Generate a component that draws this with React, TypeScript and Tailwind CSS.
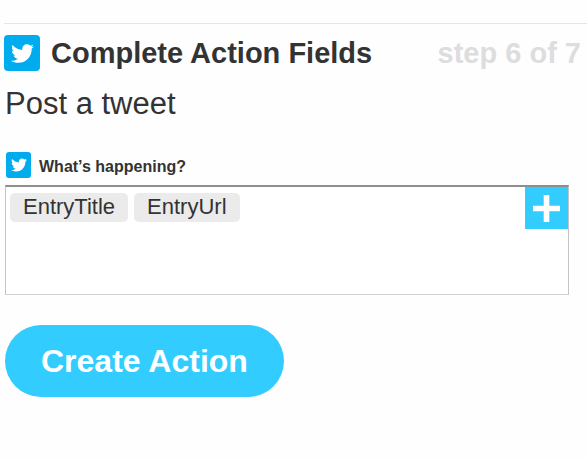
import React, { useState } from 'react';
import { FaTwitter } from 'react-icons/fa';

const fields = ['EntryTitle', 'EntryUrl'];

const App: React.FC = () => {
  const [text, setText] = useState('');

  return (
    <main className="min-h-screen bg-[#fefefe] pt-[23px] text-[#333333] font-['Liberation_Sans',Arial,sans-serif]">

      {/* Step header */}
      <header className="ml-1 flex items-center border-t border-[#e6e6e6] pt-[11px] pr-[6px] text-[29px] leading-9 font-bold">
        <span className="flex h-9 w-9 shrink-0 items-center justify-center rounded-[4px] bg-[#00acee]">
          <FaTwitter className="h-[23px] w-[23px] text-white" />
        </span>
        <h1 className="ml-[11px]">Complete Action Fields</h1>
        <span className="ml-auto text-[#dddddd]">step 6 of 7</span>
      </header>

      <form className="pl-[5px] pr-[18px]" onSubmit={e => e.preventDefault()}>
        <h2 className="mt-[15px] text-[31px] leading-9">Post a tweet</h2>

        {/* Tweet body */}
        <label htmlFor="tweet" className="mt-[30px] flex items-end gap-2 pl-px text-base leading-[22px] font-bold">
          <span className="flex h-[26px] w-[25px] shrink-0 items-center justify-center rounded-[3px] bg-[#00acee]">
            <FaTwitter className="h-4 w-4 text-white" />
          </span>
          What’s happening?
        </label>
        <div className="mt-[7px] flex h-[110px] items-start border border-t-2 border-[#c4c4c4] border-t-[#8e8e8e] border-b-[#d2d2d2] bg-white">
          <div className="flex min-w-0 flex-1 flex-wrap gap-[6px] pt-[6px] pl-1">
            {fields.map(field => (
              <span key={field} className="h-[29px] rounded-[5px] bg-[#ebebeb] px-[13px] text-[22px] leading-[28px]">
                {field}
              </span>
            ))}
            <input
              id="tweet"
              value={text}
              onChange={e => setText(e.target.value)}
              className="h-[29px] min-w-0 flex-1 text-[22px] outline-none"
            />
          </div>
          <button type="button" aria-label="Add ingredient" className="flex h-[42px] w-[43px] shrink-0 items-center justify-center bg-[#33ccff]">
            <svg viewBox="0 0 27 27" className="h-[27px] w-[27px] fill-white">
              <path d="M10.7 0h5.6v10.7H27v5.6H16.3V27h-5.6V16.3H0v-5.6h10.7z" />
            </svg>
          </button>
        </div>

        <button type="submit" className="mt-[30px] h-[72px] rounded-full bg-[#33ccff] px-9 text-[32px] font-bold text-white">
          Create Action
        </button>
      </form>

    </main>
  );
};

export default App;
